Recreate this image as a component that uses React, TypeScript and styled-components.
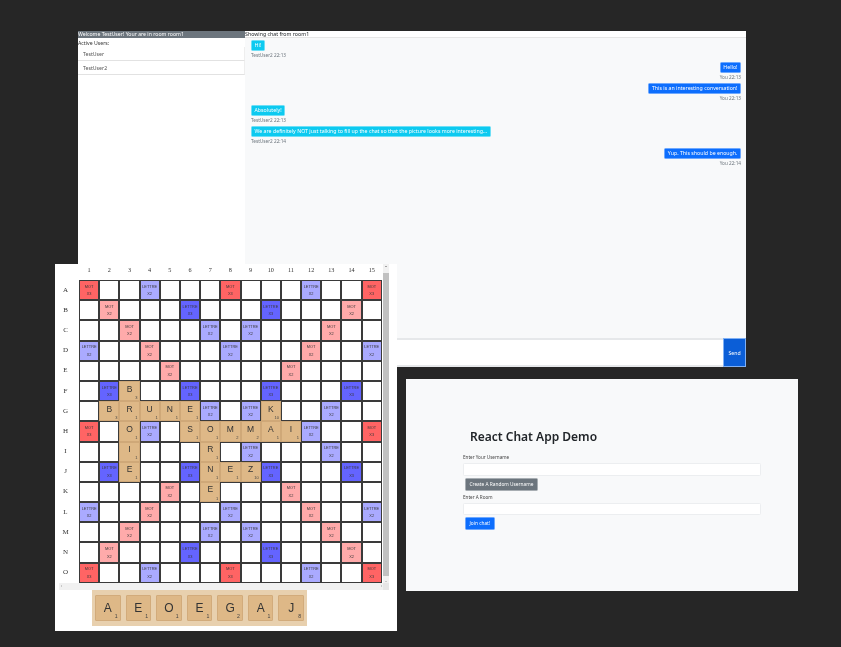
import React from "react";
import styled, { createGlobalStyle } from "styled-components";

const Global = createGlobalStyle`
  html, body { margin: 0; padding: 0; background: #262626; }
  * { box-sizing: border-box; }
`;

const Desktop = styled.div`
  position: relative;
  width: 841px;
  height: 647px;
  overflow: hidden;
  background: #262626;
  font-family: "Noto Sans", "Open Sans", sans-serif;
`;

const Win = styled.section<{ $x: number; $y: number; $w: number; $h: number }>`
  position: absolute;
  left: ${(p) => p.$x}px;
  top: ${(p) => p.$y}px;
  width: ${(p) => p.$w}px;
  height: ${(p) => p.$h}px;
  overflow: hidden;
  filter: blur(0.4px);
`;

/* Chat window */
const ChatWin = styled(Win)`
  display: grid;
  grid-template-columns: 167px 1fr;
  background: #fff;
`;
const Sidebar = styled.aside`
  display: flex;
  flex-direction: column;
  background: #fff;
  font-size: 5.2px;
  color: #212529;
`;
const WelcomeBar = styled.div`
  height: 7px;
  line-height: 7px;
  background: #6c757d;
  color: #fff;
  white-space: nowrap;
`;
const ActiveTitle = styled.div`
  height: 9px;
  line-height: 10px;
  color: #333;
`;
const UserItem = styled.div`
  height: 14px;
  padding-left: 5px;
  line-height: 14px;
  color: #555;
  border-bottom: 1px solid #e2e2e2;
  border-right: 1px solid #eee;
  &:first-of-type { border-top: 1px solid #eee; }
`;
const ChatMain = styled.div`
  display: flex;
  flex-direction: column;
  background: #f8f9fa;
  min-width: 0;
`;
const RoomBar = styled.div`
  height: 7px;
  line-height: 7px;
  font-size: 5.25px;
  background: #fff;
  color: #212529;
  border-bottom: 1px solid #e6e6e6;
  white-space: nowrap;
`;
const Messages = styled.div`
  flex: 1;
  display: flex;
  flex-direction: column;
  padding: 2px 5px 0 6px;
`;
const Msg = styled.div<{ $mine?: boolean }>`
  display: flex;
  flex-direction: column;
  align-items: ${(p) => (p.$mine ? "flex-end" : "flex-start")};
  height: 21.6px;
`;
const Bubble = styled.div<{ $mine?: boolean }>`
  height: 11px;
  line-height: 9.5px;
  padding: 0 2.5px;
  font-size: 5.25px;
  color: #fff;
  white-space: nowrap;
  border-radius: 1.5px;
  background: ${(p) => (p.$mine ? "#0d6efd" : "#0dcaf0")};
  border: 0.5px solid ${(p) => (p.$mine ? "#6ea8fe" : "#6edff6")};
`;
const Stamp = styled.div`
  height: 9px;
  line-height: 8px;
  font-size: 4.7px;
  color: #6c757d;
  white-space: nowrap;
`;
const Composer = styled.div`
  height: 29px;
  display: flex;
  background: #fff;
`;
const ChatInput = styled.div`
  flex: 1;
  background: #fff;
  border-top: 2px solid #e6e8ea;
  border-bottom: 2px solid #e6e8ea;
`;
const SendBtn = styled.div`
  width: 23px;
  display: flex;
  align-items: center;
  justify-content: center;
  background: #0b5ed7;
  color: #fff;
  font-size: 5.2px;
  border: 1px solid #7fb0f5;
`;

/* Board window */
const BoardWin = styled(Win)`
  display: flex;
  flex-direction: column;
  background: #fff;
`;
const ScrollArea = styled.div`
  display: flex;
  width: 334px;
  height: 319px;
`;
const BoardPane = styled.div`
  width: 328px;
  display: grid;
  grid-template-columns: 24px repeat(15, 20.2px);
  grid-template-rows: 16px repeat(15, 20.2px);
  align-content: start;
`;
const Corner = styled.div``;
const AxisLabel = styled.div`
  display: flex;
  align-items: center;
  justify-content: center;
  padding-bottom: 6px;
  font-family: "Liberation Serif", serif;
  font-size: 6.2px;
  color: #333;
`;
const RowLabel = styled(AxisLabel)`
  padding-bottom: 1px;
  padding-right: 3px;
  font-size: 7px;
`;
const premiumBg: Record<string, string> = {
  TW: "#ff6464",
  DW: "#ffaaaa",
  TL: "#6464ff",
  DL: "#aaaaff",
};
const Cell = styled.div<{ $kind?: string }>`
  display: flex;
  flex-direction: column;
  align-items: center;
  justify-content: center;
  gap: 3.5px;
  padding-top: 0.5px;
  border: 1px solid #3a3a3a;
  background: ${(p) => (p.$kind ? premiumBg[p.$kind] : "#fff")};
  color: #3a3a3a;
  font-family: "Liberation Sans", sans-serif;
  font-size: 3.9px;
  line-height: 4px;
`;
const TileCell = styled.div`
  position: relative;
  display: flex;
  align-items: center;
  justify-content: center;
  background: #deb887;
  border: 1px solid #cfa878;
  color: #333;
  font-family: "Liberation Sans", sans-serif;
  font-size: 8.5px;
  padding-bottom: 5px;
`;
const TileScore = styled.span`
  position: absolute;
  right: 1px;
  bottom: 0.5px;
  font-size: 4px;
  line-height: 5px;
  color: #444;
`;
const VScroll = styled.div`
  position: relative;
  width: 6px;
  background: #f1f1f1;
  padding-top: 9px;
  padding-bottom: 7px;
  display: flex;
`;
const VThumb = styled.div`
  flex: 1;
  background: #c1c1c1;
`;
const Arrow = styled.span<{ $dir: "up" | "down" | "left" | "right" }>`
  position: absolute;
  width: 0;
  height: 0;
  border: 1.5px solid transparent;
  ${(p) =>
    p.$dir === "up"
      ? "top: 1px; left: 1.5px; border-bottom-color: #505050;"
      : p.$dir === "down"
      ? "bottom: 0; left: 1.5px; border-top-color: #a0a0a0;"
      : p.$dir === "left"
      ? "left: 1px; top: 2px; border-right-color: #a0a0a0;"
      : "right: 0; top: 2px; border-left-color: #a0a0a0;"}
`;
const HScroll = styled.div`
  position: relative;
  margin-left: 4px;
  width: 330px;
  height: 7px;
  background: #f1f1f1;
  border-right: 6px solid #e6e6e6;
`;
const Rack = styled.div`
  margin-left: 37px;
  width: 215px;
  height: 36px;
  padding: 5px 3px;
  display: flex;
  gap: 5px;
  background: #e8d0ae;
`;
const RackTile = styled.div`
  position: relative;
  width: 26px;
  height: 26px;
  display: flex;
  align-items: center;
  justify-content: center;
  background: #deb887;
  border: 1px solid #d2ab7b;
  border-radius: 1px;
  color: #333;
  font-family: "Liberation Sans", sans-serif;
  font-size: 12px;
  padding-bottom: 1px;
`;
const RackScore = styled.span`
  position: absolute;
  right: 2px;
  bottom: 1px;
  font-size: 5.2px;
  line-height: 6px;
  color: #444;
`;

/* Join form */
const FormWin = styled(Win)`
  background: #f8f9fa;
  padding: 50px 37px 0 57px;
  display: flex;
  flex-direction: column;
  align-items: stretch;
`;
const Title = styled.h1`
  margin: 0 0 9px 7px;
  font-size: 12px;
  line-height: 16px;
  font-weight: 600;
  color: #212529;
  white-space: nowrap;
`;
const FieldLabel = styled.div`
  height: 7px;
  line-height: 7px;
  font-size: 4.6px;
  color: #444;
`;
const TextBox = styled.div`
  margin-top: 2px;
  height: 12.5px;
  background: #fff;
  border: 1px solid #eceef0;
  border-radius: 1.5px;
`;
const FormBtn = styled.div<{ $primary?: boolean }>`
  align-self: flex-start;
  margin: 2px 0 3px 2px;
  height: 13px;
  padding: 0 3.5px;
  line-height: 11.5px;
  font-size: 4.8px;
  color: #fff;
  white-space: nowrap;
  border-radius: 1.5px;
  background: ${(p) => (p.$primary ? "#0d6efd" : "#6c757d")};
  border: 1px solid ${(p) => (p.$primary ? "#6ea8fe" : "#a7adb2")};
`;

const msgs = [
  { t: "Hi!", s: "TestUser2  22:13" },
  { t: "Hello!", s: "You  22:13", m: true },
  { t: "This is an interesting conversation!", s: "You  22:13", m: true },
  { t: "Absolutely!", s: "TestUser2  22:13" },
  {
    t: "We are definitely NOT just talking to fill up the chat so that the picture looks more interesting...",
    s: "TestUser2  22:14",
  },
  { t: "Yup. This should be enough.", s: "You  22:14", m: true },
];

const layout = [
  "T..d...T...d..T",
  ".D...t...t...D.",
  "..D...d.d...D..",
  "d..D...d...D..d",
  "....D.....D....",
  ".t...t...t...t.",
  "..d...d.d...d..",
  "T..d.......d..T",
  "..d...d.d...d..",
  ".t...t...t...t.",
  "....D.....D....",
  "d..D...d...D..d",
  "..D...d.d...D..",
  ".D...t...t...D.",
  "T..d...T...d..T",
];
const kinds: Record<string, { k: string; a: string; b: string }> = {
  T: { k: "TW", a: "MOT", b: "X3" },
  D: { k: "DW", a: "MOT", b: "X2" },
  t: { k: "TL", a: "LETTRE", b: "X3" },
  d: { k: "DL", a: "LETTRE", b: "X2" },
};
const placed: Record<string, [string, number]> = {
  "5,2": ["B", 3],
  "6,1": ["B", 3],
  "6,2": ["R", 1],
  "6,3": ["U", 1],
  "6,4": ["N", 1],
  "6,5": ["E", 1],
  "6,9": ["K", 10],
  "7,2": ["O", 1],
  "7,5": ["S", 1],
  "7,6": ["O", 1],
  "7,7": ["M", 2],
  "7,8": ["M", 2],
  "7,9": ["A", 1],
  "7,10": ["I", 1],
  "8,2": ["I", 1],
  "8,6": ["R", 1],
  "9,2": ["E", 1],
  "9,6": ["N", 1],
  "9,7": ["E", 1],
  "9,8": ["Z", 10],
  "10,6": ["E", 1],
};
const rows = "ABCDEFGHIJKLMNO".split("");
const rack: [string, number][] = [
  ["A", 1],
  ["E", 1],
  ["O", 1],
  ["E", 1],
  ["G", 2],
  ["A", 1],
  ["J", 8],
];

export default function App() {
  return (
    <Desktop>
      <Global />
      <ChatWin $x={78} $y={31} $w={668} $h={336}>
        <Sidebar>
          <WelcomeBar>Welcome TestUser! Your are in room room1</WelcomeBar>
          <ActiveTitle>Active Users:</ActiveTitle>
          <UserItem>TestUser</UserItem>
          <UserItem>TestUser2</UserItem>
        </Sidebar>
        <ChatMain>
          <RoomBar>Showing chat from room1</RoomBar>
          <Messages>
            {msgs.map((m, i) => (
              <Msg key={i} $mine={m.m}>
                <Bubble $mine={m.m}>{m.t}</Bubble>
                <Stamp>{m.s}</Stamp>
              </Msg>
            ))}
          </Messages>
          <Composer>
            <ChatInput />
            <SendBtn>Send</SendBtn>
          </Composer>
        </ChatMain>
      </ChatWin>

      <BoardWin $x={55} $y={264} $w={342} $h={367}>
        <ScrollArea>
          <BoardPane>
            <Corner />
            {Array.from({ length: 15 }, (_, i) => (
              <AxisLabel key={i}>{i + 1}</AxisLabel>
            ))}
            {rows.map((r, y) => (
              <React.Fragment key={r}>
                <RowLabel>{r}</RowLabel>
                {layout[y].split("").map((c, x) => {
                  const tile = placed[`${y},${x}`];
                  if (tile) {
                    return (
                      <TileCell key={x}>
                        {tile[0]}
                        <TileScore>{tile[1]}</TileScore>
                      </TileCell>
                    );
                  }
                  const info = kinds[c];
                  return info ? (
                    <Cell key={x} $kind={info.k}>
                      <span>{info.a}</span>
                      <span>{info.b}</span>
                    </Cell>
                  ) : (
                    <Cell key={x} />
                  );
                })}
              </React.Fragment>
            ))}
          </BoardPane>
          <VScroll>
            <Arrow $dir="up" />
            <VThumb />
            <Arrow $dir="down" />
          </VScroll>
        </ScrollArea>
        <HScroll>
          <Arrow $dir="left" />
          <Arrow $dir="right" />
        </HScroll>
        <Rack>
          {rack.map(([l, s], i) => (
            <RackTile key={i}>
              {l}
              <RackScore>{s}</RackScore>
            </RackTile>
          ))}
        </Rack>
      </BoardWin>

      <FormWin $x={406} $y={379} $w={392} $h={212}>
        <Title>React Chat App Demo</Title>
        <FieldLabel>Enter Your Username</FieldLabel>
        <TextBox />
        <FormBtn>Create A Random Username</FormBtn>
        <FieldLabel>Enter A Room</FieldLabel>
        <TextBox />
        <FormBtn $primary>Join chat!</FormBtn>
      </FormWin>
    </Desktop>
  );
}
